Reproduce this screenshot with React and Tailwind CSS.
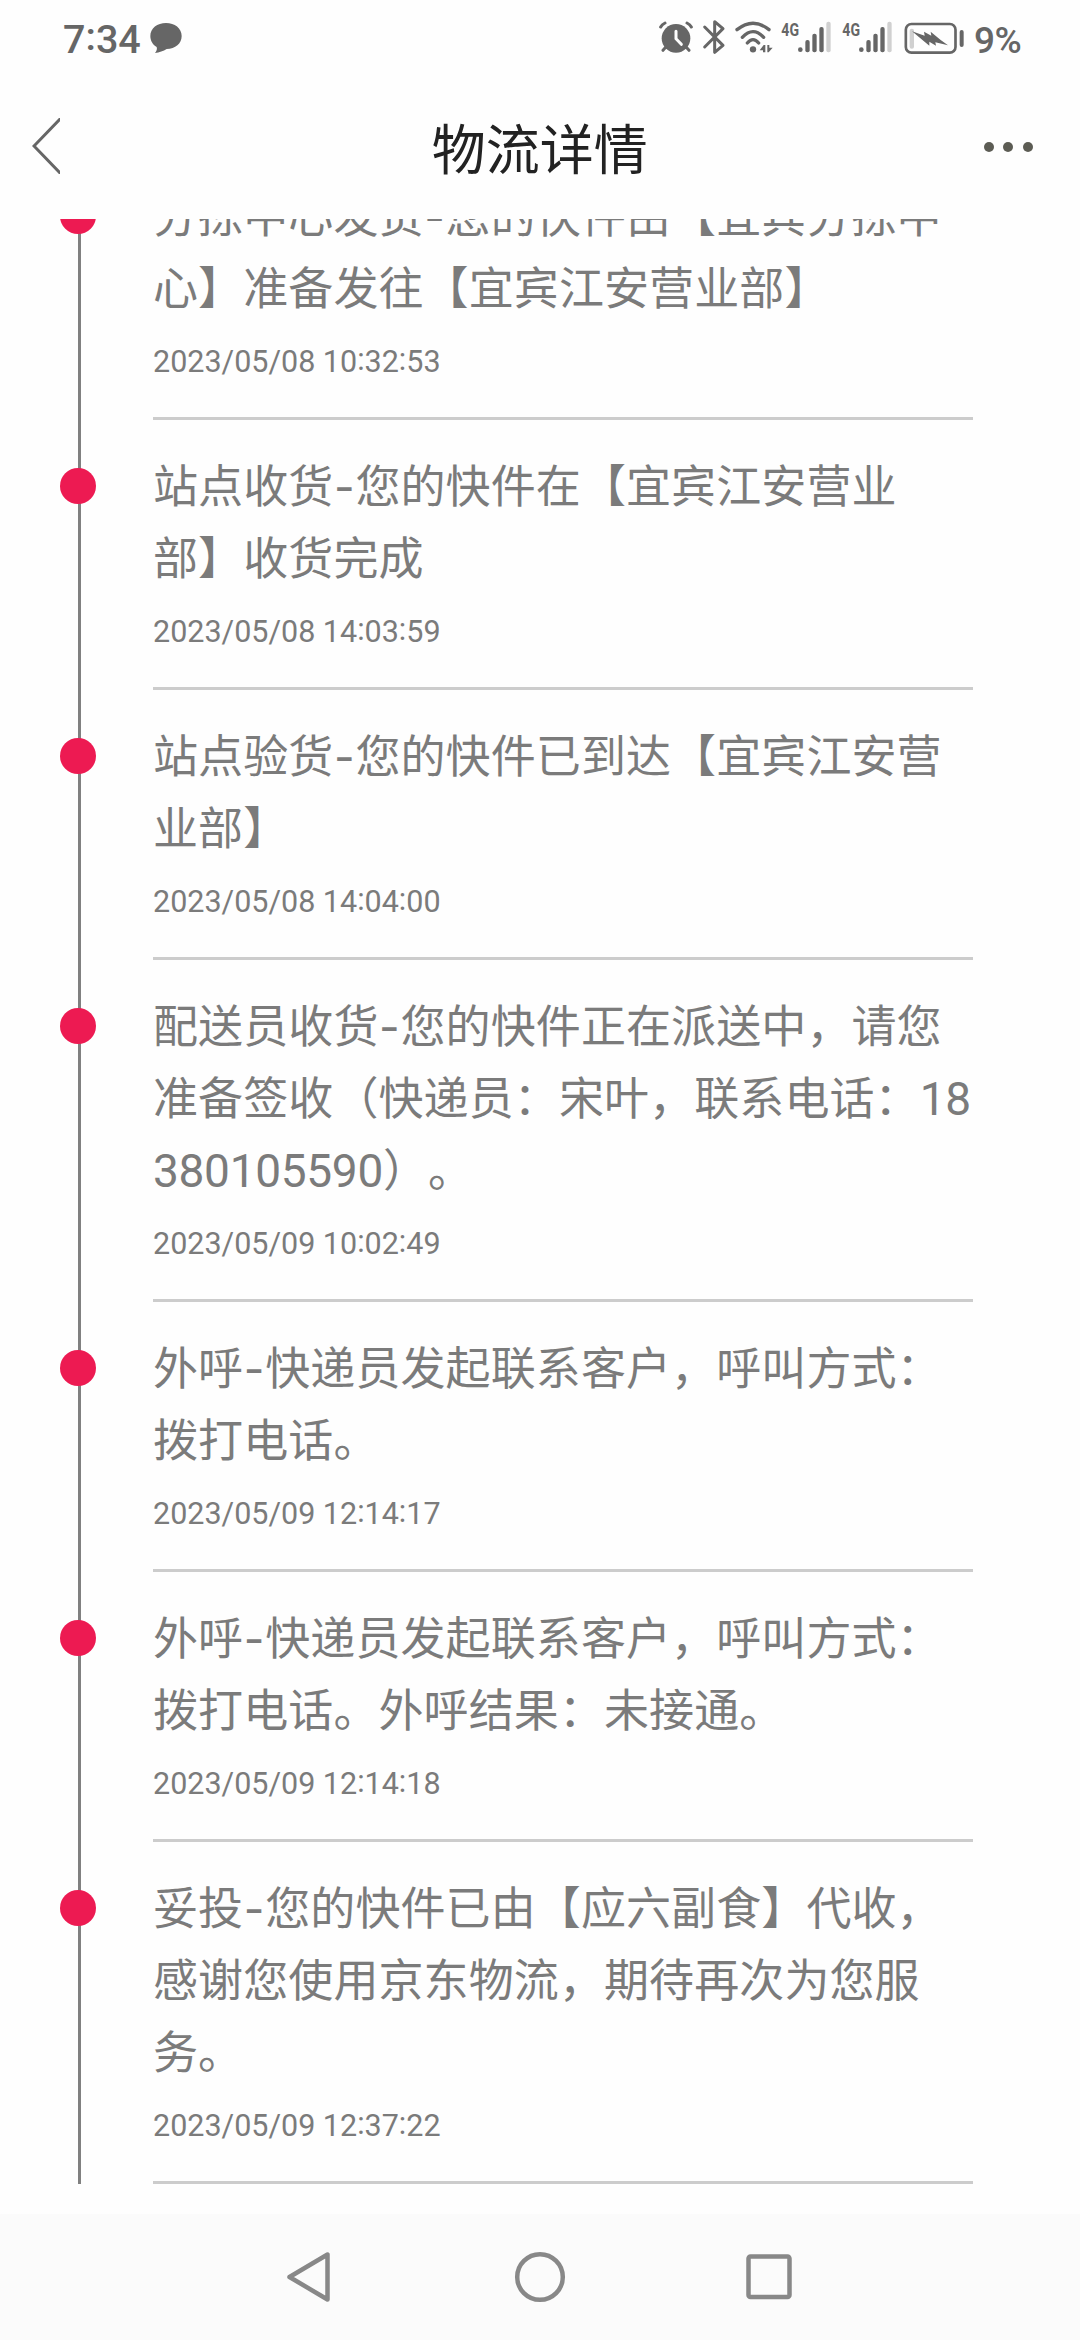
import { Fragment } from "react";

const font = "font-['Noto_Sans_CJK_SC','Noto_Sans',sans-serif]";

const events = [
  { lines: ["分拣中心发货-您的快件由【宜宾分拣中", "心】准备发往【宜宾江安营业部】"], time: "2023/05/08 10:32:53" },
  { lines: ["站点收货-您的快件在【宜宾江安营业", "部】收货完成"], time: "2023/05/08 14:03:59" },
  { lines: ["站点验货-您的快件已到达【宜宾江安营", "业部】"], time: "2023/05/08 14:04:00" },
  { lines: ["配送员收货-您的快件正在派送中，请您", "准备签收（快递员：宋叶，联系电话：18", "380105590）。"], time: "2023/05/09 10:02:49" },
  { lines: ["外呼-快递员发起联系客户，呼叫方式：", "拨打电话。"], time: "2023/05/09 12:14:17" },
  { lines: ["外呼-快递员发起联系客户，呼叫方式：", "拨打电话。外呼结果：未接通。"], time: "2023/05/09 12:14:18" },
  { lines: ["妥投-您的快件已由【应六副食】代收，", "感谢您使用京东物流，期待再次为您服", "务。"], time: "2023/05/09 12:37:22" },
];

function Line({ text }) {
  return (
    <div className="h-[72px] whitespace-nowrap">
      {text.split(/(-|\d+)/).map((part, i) => {
        if (part === "-") {
          return (
            <span key={i} className="inline-block w-[22px] text-center font-['Inter',sans-serif] leading-none">-</span>
          );
        }
        if (/^\d+$/.test(part)) {
          return (
            <span key={i} className="font-['Roboto',sans-serif] text-[46px] leading-none tracking-[-0.3px]">{part}</span>
          );
        }
        return <Fragment key={i}>{part}</Fragment>;
      })}
    </div>
  );
}

/* Clock digits with the colons raised to the middle of the figures. */
function Clock({ text }) {
  return text.split(":").map((part, i) => (
    <Fragment key={i}>
      {i > 0 && <span className="relative -top-[0.08em]">:</span>}
      {part}
    </Fragment>
  ));
}

function Event({ lines, time }) {
  return (
    <li className="flex">
      <div className="relative ml-[78px] mr-[72px] w-[3px] shrink-0 bg-[#808080]">
        <span className="absolute -left-[18px] top-[48px] size-[36px] rounded-full bg-[#ed1a52]" />
      </div>
      <div className="w-[820px] border-b-[3px] border-[#cccccc] pt-[28px]">
        <div className="pb-[2px] text-[45px] leading-[72px] tracking-[0.1px]">
          {lines.map((l) => (
            <Line key={l} text={l} />
          ))}
        </div>
        <div className="h-[93px] pt-[14px] font-['Roboto',sans-serif] text-[30.5px] leading-[48px]">
          <Clock text={time} />
        </div>
      </div>
    </li>
  );
}

function Signal() {
  return (
    <svg width="50" height="34" viewBox="0 0 150 102" fill="#666" className="overflow-visible">
      <text x="1" y="47" fontFamily="Roboto, sans-serif" fontWeight="700" fontSize="57" textLength="53" lengthAdjust="spacingAndGlyphs">4G</text>
      <circle cx="58" cy="89" r="7" />
      <rect x="73" y="60" width="13" height="37" rx="6" />
      <rect x="94" y="41" width="13" height="56" rx="6" />
      <rect x="115" y="21" width="13" height="76" rx="6" />
      <rect x="136" y="5" width="13" height="92" rx="6" fill="#d0d0d0" />
    </svg>
  );
}

function StatusBar() {
  return (
    <div className="flex h-[80px] items-start text-[#666666]">
      <div className="ml-[63px] mt-[11px] w-[87px] font-['Roboto',sans-serif] text-[39.5px] font-medium leading-[58px]">
        <Clock text="7:34" />
      </div>
      <svg className="mt-[22px]" width="32" height="32" viewBox="0 0 96 96" fill="#666">
        <path d="M48 3C74 3 95 19 95 42S76 80 50 81C40 87 28 92 15 93C20 87 22 81 20 75C8 68 1 56 1 42C1 19 22 3 48 3Z" />
      </svg>
      <div className="ml-auto flex items-start pt-[20px]">
        <svg width="34" height="34" viewBox="0 0 102 102" fill="none" stroke="#666" strokeLinecap="round">
          <circle cx="51" cy="55" r="43" fill="#666" stroke="none" />
          <path d="M5 21Q9 13 18 9M97 21Q93 13 84 9M20 82L12 91M82 82L90 91" strokeWidth="9" />
          <path d="M51 34V56L67 73" stroke="#fefefe" strokeWidth="9" />
        </svg>
        <svg className="ml-[9px]" width="24" height="36" viewBox="0 0 72 108" fill="none" stroke="#666" strokeWidth="9" strokeLinecap="round" strokeLinejoin="round">
          <path d="M8 21L63 76L38 97V5L63 26L8 81" />
        </svg>
        <svg className="ml-[9px]" width="38" height="34" viewBox="0 0 114 102" fill="none" stroke="#666" strokeWidth="10" strokeLinecap="round">
          <path d="M6 29Q54 -10 102 29M22 52Q54 18 86 52M37 69Q54 49 71 69" />
          <circle cx="54" cy="88" r="9.5" fill="#666" stroke="none" />
          <path d="M91 97V75H86L74 91H84V97ZM97 75V97H101L113 83H103V75Z" fill="#666" stroke="none" />
        </svg>
        <div className="ml-[8px]"><Signal /></div>
        <div className="ml-[11px]"><Signal /></div>
        <svg className="ml-[12px]" width="61" height="36" viewBox="0 0 183 108" fill="none">
          <rect x="5.5" y="12" width="149" height="86" rx="17" stroke="#666" strokeWidth="8" />
          <rect x="17" y="26" width="13" height="60" rx="6" fill="#d0d0d0" />
          <rect x="167" y="30" width="12" height="51" rx="6" fill="#666" />
          <path d="M24 34L62 47L60 35L82 47L80 35L110 60L132 76L94 67L96 77L76 65L76 77Z" fill="#666" />
        </svg>
        <div className="ml-[9px] -mt-[8px] w-[106px] font-['Roboto',sans-serif] text-[37px] font-medium leading-[58px] tracking-[-0.5px]">9%</div>
      </div>
    </div>
  );
}

export default function App() {
  return (
    <div className={`flex h-[2340px] w-[1080px] flex-col overflow-hidden bg-[#fefefe] text-[#7b7b7b] [text-spacing-trim:space-all] ${font}`}>
      <StatusBar />
      <header className="flex h-[139px] shrink-0 items-start justify-between">
        <svg className="ml-[32px] mt-[38px]" width="28" height="56" viewBox="0 0 28 56" fill="none" stroke="#666" strokeWidth="3">
          <path d="M30 -1L2 28L30 57" />
        </svg>
        <h1 className="mt-[27px] pl-[36px] text-[54px] leading-[80px] text-[#222222]">物流详情</h1>
        <div className="mr-[47px] mt-[62px] flex gap-[9.7px]">
          <span className="size-[10px] rounded-full bg-[#5c5c54]" />
          <span className="size-[10px] rounded-full bg-[#5c5c54]" />
          <span className="size-[10px] rounded-full bg-[#5c5c54]" />
        </div>
      </header>
      <main className="flex h-[1995px] shrink-0 flex-col justify-end overflow-hidden pb-[30px]">
        <ul>
          {events.map((e) => (
            <Event key={e.time} {...e} />
          ))}
        </ul>
      </main>
      <nav className="flex h-[126px] shrink-0 items-center justify-center gap-[178px] bg-[#fbfbfb]">
        <svg width="52" height="56" viewBox="0 0 52 56" fill="none" stroke="#888" strokeWidth="4.5" strokeLinejoin="round">
          <path d="M43.5 5.5V50.5L5.5 28Z" />
        </svg>
        <svg width="52" height="52" viewBox="0 0 52 52" fill="none" stroke="#888" strokeWidth="4.5">
          <circle cx="26" cy="26" r="22.8" />
        </svg>
        <svg width="52" height="52" viewBox="0 0 52 52" fill="none" stroke="#888" strokeWidth="4.5">
          <rect x="4.5" y="5.5" width="41" height="40.5" rx="2" />
        </svg>
      </nav>
    </div>
  );
}
